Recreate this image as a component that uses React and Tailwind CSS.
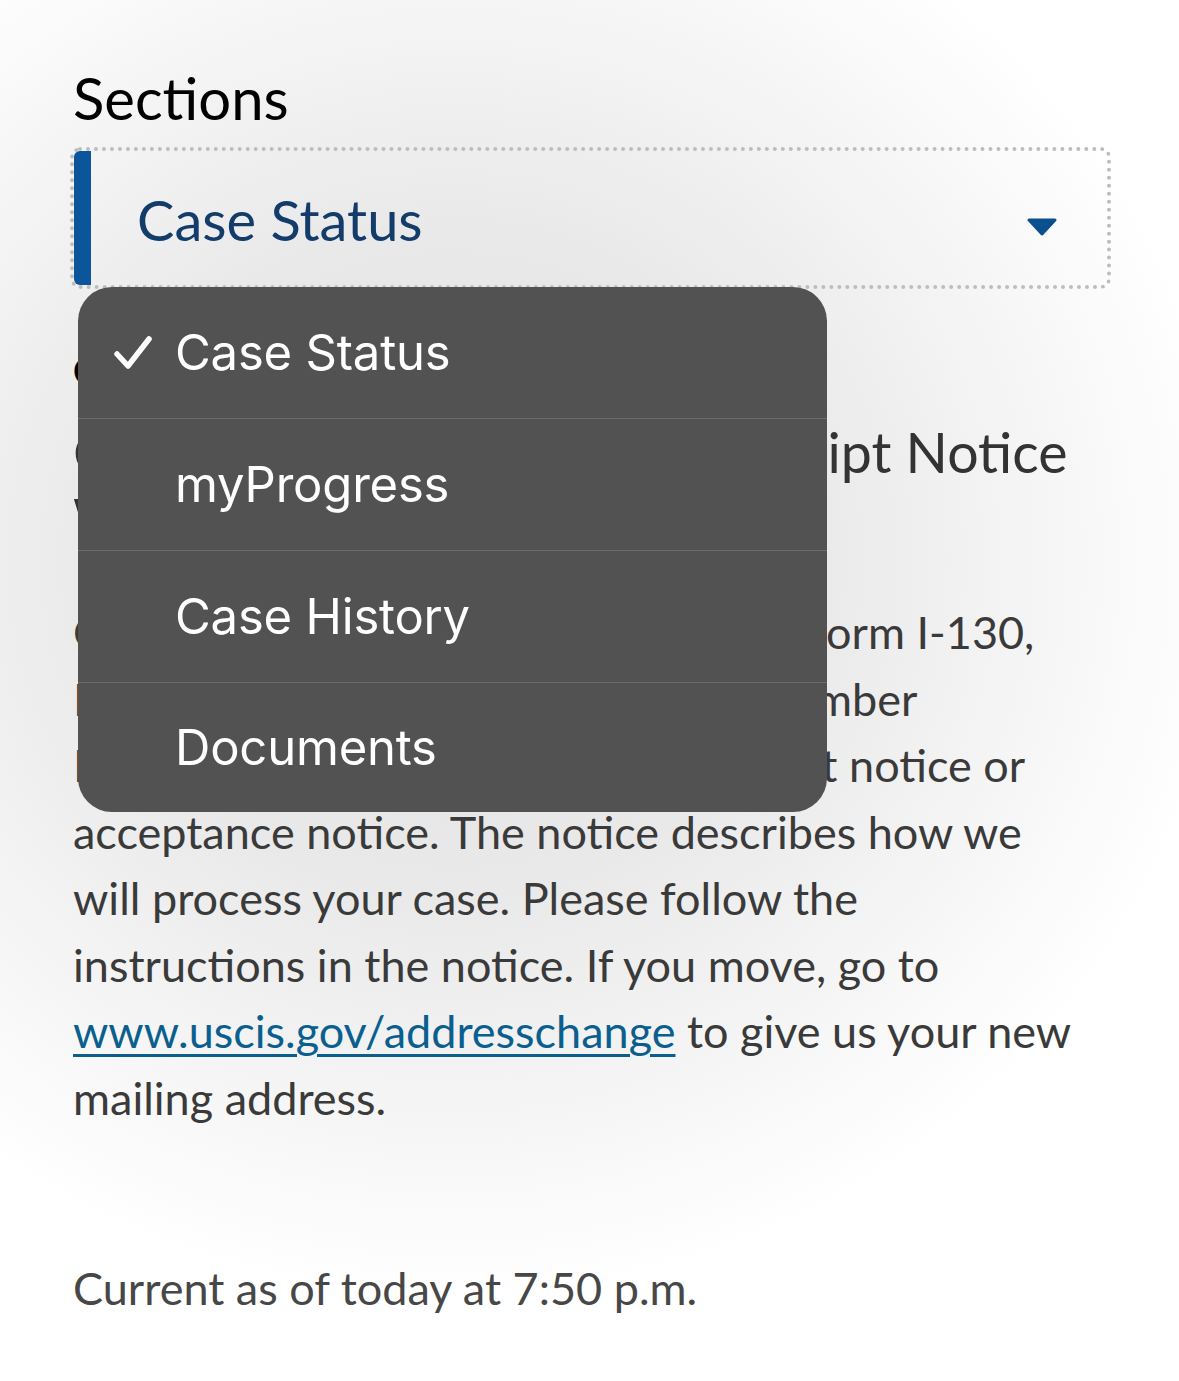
import React from 'react';

const items = [
    { label: 'Case Status', h: 'h-[131px]' },
    { label: 'myProgress', h: 'h-[132px]' },
    { label: 'Case History', h: 'h-[132px]' },
    { label: 'Documents', h: 'h-[130px]' },
];

const Check = () => (
    <svg width="38" height="36" viewBox="0 0 38 36" className="absolute left-[36px] top-1/2 -translate-y-1/2">
        <path d="M3 19 L14 31 L35 4" fill="none" stroke="#ffffff" strokeWidth="5.5" strokeLinecap="round" strokeLinejoin="round" />
    </svg>
);

const Menu = () => (
    <div className="absolute left-[78px] top-[287px] w-[749px] z-10 bg-[#525252] rounded-[34px] overflow-hidden font-['Inter',sans-serif]">
        {items.map((it, i) => (
            <div key={it.label} className={`relative ${it.h} flex items-center pl-[97px] ${i > 0 ? 'border-t border-[#6c6c6c]' : ''}`}>
                {i === 0 && <Check />}
                <span className="text-white text-[49px] leading-none tracking-[-0.2px]">{it.label}</span>
            </div>
        ))}
    </div>
);

const App = () => {
    return (
        <div className="relative min-h-[1381px] overflow-hidden font-['Lato',sans-serif] bg-[radial-gradient(ellipse_780px_740px_at_452px_560px,#e3e3e3_0%,#e9e9e9_45%,#ffffff_100%)]">
            <Menu />
            <div className="pl-[73px] pr-[68px] pt-[69px]">
                <h2 className="text-[58px] leading-none text-black">Sections</h2>

                <div className="mt-[20px] -ml-[3px] h-[142px] border-[4px] border-dotted border-[#bdbdbd] rounded-[10px] flex items-stretch">
                    <div className="w-[17px] bg-[#0b559a] rounded-l-[6px]"></div>
                    <div className="flex-1 flex items-center justify-between pl-[46px] pr-[50px]">
                        <span className="text-[56px] leading-none text-[#133c6b] mt-[3px]">Case Status</span>
                        <svg width="30" height="18" viewBox="0 0 30 18" className="mt-[18px]">
                            <path d="M2 2 L28 2 L15 16 Z" fill="#0a4f8f" stroke="#0a4f8f" strokeWidth="3" strokeLinejoin="round" />
                        </svg>
                    </div>
                </div>

                <h3 className="mt-[62px] text-[38px] leading-none font-bold text-black">Current Status</h3>

                <h1 className="mt-[30px] text-[55.5px] leading-[66px] text-[#333333]">
                    <span className="block whitespace-nowrap">Case Was Received and A Receipt Notice</span>
                    <span className="block whitespace-nowrap">Was Sent</span>
                </h1>

                <div className="mt-[48px] text-[45px] leading-[66.5px] text-[#3a3a3a]">
                    <p>
                        <span className="block whitespace-nowrap">On March 4, 2023, we received your Form I-130,</span>
                        <span className="block whitespace-nowrap">Petition for Alien Relative, Receipt Number</span>
                        <span className="block whitespace-nowrap">IOE092345678, and sent you a receipt notice or</span>
                        <span className="block whitespace-nowrap">acceptance notice. The notice describes how we</span>
                        <span className="block whitespace-nowrap">will process your case. Please follow the</span>
                        <span className="block whitespace-nowrap">instructions in the notice. If you move, go to</span>
                        <span className="block whitespace-nowrap">
                            <a href="#" className="text-[#0b5f8f] underline decoration-[3px] underline-offset-[6px]">www.uscis.gov/addresschange</a> to give us your new
                        </span>
                        <span className="block whitespace-nowrap">mailing address.</span>
                    </p>
                    <p className="mt-[124px] text-[#474747]">Current as of today at 7:50 p.m.</p>
                </div>
            </div>
        </div>
    );
};

export default App;
